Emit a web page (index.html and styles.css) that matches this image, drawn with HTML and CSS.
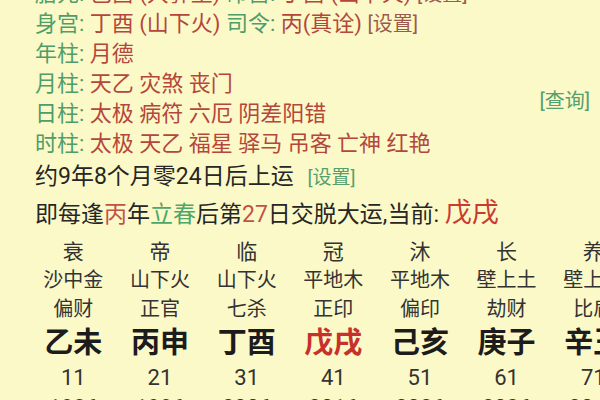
FILE: index.html
```html
<!DOCTYPE html>
<html>
  <head>
    <meta charset="utf-8">
    <link rel="stylesheet" href="styles.css">
  </head>
  <body>
    <div class="page">
      <div class="info">
        <div class="line"><span class="lbl">胎元:</span> <span class="val">己酉 (大驿土)</span> <span class="lbl">命宫:</span> <span class="val">丁酉 (山下火)</span> <span class="set">[设置]</span></div>
        <div class="line"><span class="lbl">身宫:</span> <span class="val">丁酉 (山下火)</span> <span class="lbl">司令:</span> <span class="val">丙(真诠)</span> <span class="set">[设置]</span></div>
        <div class="line"><span class="lbl">年柱:</span> <span class="val">月德</span></div>
        <div class="line"><span class="lbl">月柱:</span> <span class="val">天乙 灾煞 丧门</span></div>
        <div class="line"><span class="query">[查询]</span><span class="lbl">日柱:</span> <span class="val">太极 病符 六厄 阴差阳错</span></div>
        <div class="line"><span class="lbl">时柱:</span> <span class="val">太极 天乙 福星 驿马 吊客 亡神 红艳</span></div>
      </div>

      <div class="start">约9年8个月零24日后上运 <span class="set-green">[设置]</span></div>
      <div class="every">即每逢<span class="red">丙</span>年<span class="green">立春</span>后第<span class="red">27</span>日交脱大运,当前: <span class="now">戊戌</span></div>

      <div class="dayun">
        <div class="col"><div class="cs">衰</div><div class="ny">沙中金</div><div class="ss">偏财</div><div class="gz">乙未</div><div class="age">11</div><div class="yr">1986</div></div>
        <div class="col"><div class="cs">帝</div><div class="ny">山下火</div><div class="ss">正官</div><div class="gz">丙申</div><div class="age">21</div><div class="yr">1996</div></div>
        <div class="col"><div class="cs">临</div><div class="ny">山下火</div><div class="ss">七杀</div><div class="gz">丁酉</div><div class="age">31</div><div class="yr">2006</div></div>
        <div class="col"><div class="cs">冠</div><div class="ny">平地木</div><div class="ss">正印</div><div class="gz cur">戊戌</div><div class="age">41</div><div class="yr">2016</div></div>
        <div class="col"><div class="cs">沐</div><div class="ny">平地木</div><div class="ss">偏印</div><div class="gz">己亥</div><div class="age">51</div><div class="yr">2026</div></div>
        <div class="col"><div class="cs">长</div><div class="ny">壁上土</div><div class="ss">劫财</div><div class="gz">庚子</div><div class="age">61</div><div class="yr">2036</div></div>
        <div class="col"><div class="cs">养</div><div class="ny">壁上土</div><div class="ss">比肩</div><div class="gz">辛丑</div><div class="age">71</div><div class="yr">2046</div></div>
      </div>
    </div>
  </body>
</html>
```

FILE: styles.css
```css
html, body{
  margin: 0;
  height: 100%;
  overflow: hidden;
}
body{
  background: #fcf9c8;
  font-family: Roboto, "Noto Sans CJK SC", sans-serif;
  color: #262626;
}
.page{
  padding-left: 35px;
  margin-top: -21px;
}
.line{
  font-size: 22px;
  line-height: 30px;
  white-space: nowrap;
}
.lbl{
  color: #4f9d68;
}
.val{
  color: #b4463c;
}
.set{
  color: #9c5a4e;
  font-size: 20px;
}
.query{
  float: right;
  margin-right: 10px;
  margin-top: -13px;
  color: #55a06f;
  font-size: 20px;
}
.start{
  font-size: 23px;
  line-height: 36px;
  white-space: nowrap;
}
.set-green{
  color: #55a06f;
  font-size: 19px;
  margin-left: 8px;
}
.every{
  font-size: 23px;
  line-height: 34px;
  white-space: nowrap;
}
.red{
  color: #c4504a;
}
.green{
  color: #4fa66a;
}
.now{
  color: #c83a32;
  font-size: 27px;
}
.dayun{
  display: grid;
  grid-template-columns: repeat(7, 86.67px);
  margin-left: -5px;
  margin-top: 6px;
  text-align: center;
  color: #333;
}
.cs{
  font-size: 21px;
  line-height: 28px;
}
.ny{
  font-size: 20px;
  line-height: 29px;
}
.ss{
  font-size: 20px;
  line-height: 28px;
}
.gz{
  font-size: 29px;
  line-height: 40px;
  font-weight: bold;
  color: #1c1c1c;
}
.gz.cur{
  color: #c8302c;
}
.age, .yr{
  font-size: 22px;
  line-height: 30px;
}
```
